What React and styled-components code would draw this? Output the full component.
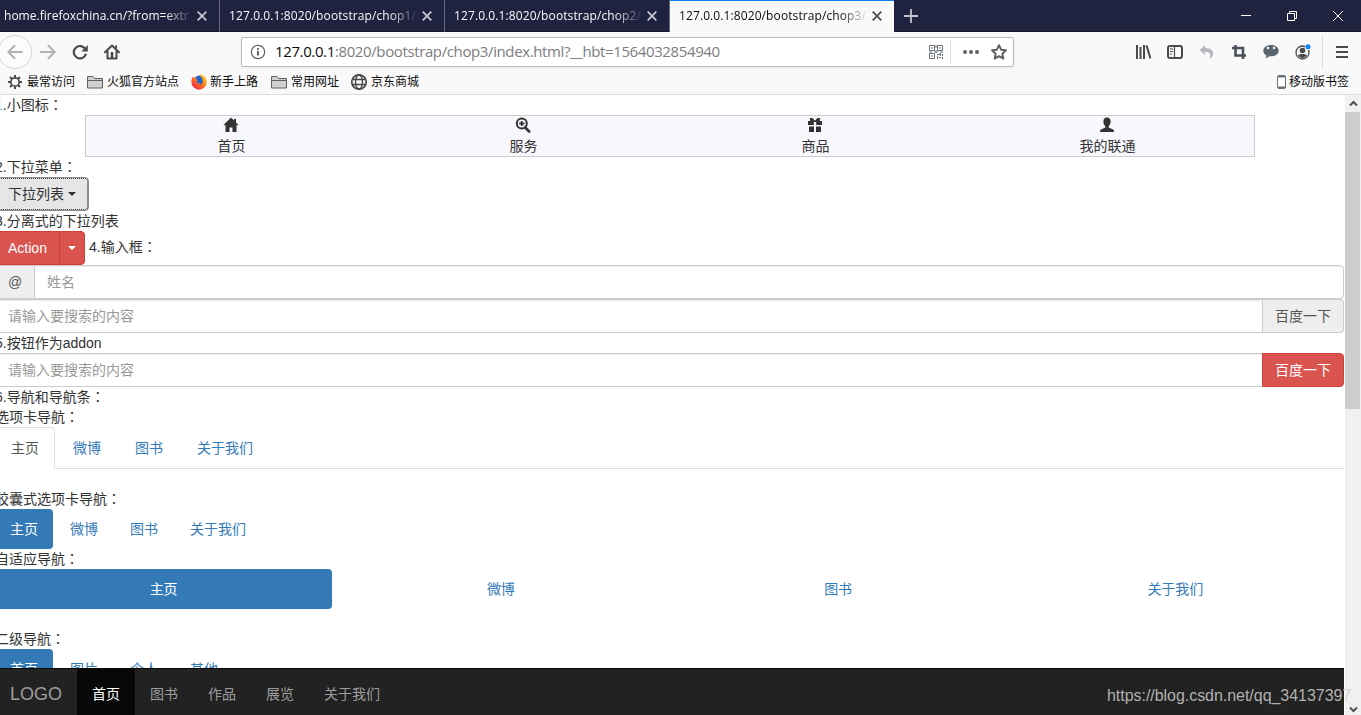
import React from "react";
import styled, { createGlobalStyle, css } from "styled-components";

const ui = `"Open Sans", "Noto Sans CJK SC", sans-serif`;
const body = `"Liberation Sans", "Noto Sans CJK SC", sans-serif`;

const Global = createGlobalStyle`
  *, *::before, *::after { box-sizing: border-box; }
  body { margin: 0; overflow: hidden; }
`;

const Window = styled.div`
  width: 1361px;
  height: 715px;
  display: flex;
  flex-direction: column;
  overflow: hidden;
  background: #fff;
  position: relative;
`;

/* ---------- browser chrome ---------- */
const TabStrip = styled.div`
  height: 32px;
  flex: none;
  display: flex;
  background: #202340;
  border-bottom: 1px solid #15172b;
`;
const Tab = styled.div`
  width: ${(p) => p.$w}px;
  height: 32px;
  display: flex;
  align-items: center;
  padding-left: ${(p) => p.$pad || 9}px;
  padding-right: 12px;
  font: 12px/32px ${ui};
  color: ${(p) => (p.$active ? "#0c0c0d" : "#f9f9fa")};
  border-right: 1px solid ${(p) => (p.$active ? "#f9f9fa" : "#62647a")};
  ${(p) =>
    p.$active &&
    css`
      background: linear-gradient(#0a84ff 1px, #f9f9fa 1px);
      border-right: 0;
    `}
`;
const TabTitle = styled.span`
  flex: 1;
  min-width: 0;
  white-space: nowrap;
  letter-spacing: ${(p) => p.$ls}px;
  mask-image: linear-gradient(to right, #000 calc(100% - 30px), transparent);
`;
const TabClose = styled.svg`
  flex: none;
  width: 10px;
  height: 10px;
  margin-left: 3px;
  stroke: ${(p) => (p.$active ? "#4a4a4f" : "#c9cad3")};
  stroke-width: 1.7;
`;
const NewTab = styled.div`
  display: flex;
  align-items: center;
  padding-left: 10px;
  height: 31px;
`;
const Spacer = styled.div`
  flex: 1;
`;
const WindowButtons = styled.div`
  display: flex;
  align-items: center;
  gap: 36px;
  padding-right: 18px;
  height: 31px;
`;
const ToolBar = styled.div`
  height: 40px;
  flex: none;
  display: flex;
  align-items: center;
  background: #f9f9fa;
`;
const NavButtons = styled.div`
  display: flex;
  align-items: center;
  width: 241px;
`;
const BackCircle = styled.div`
  width: 34px;
  height: 34px;
  margin-left: -2px;
  margin-right: 7px;
  border: 1px solid #d5d5d7;
  border-radius: 50%;
  background: #fcfcfc;
  display: flex;
  align-items: center;
  justify-content: center;
`;
const Icon = styled.svg`
  width: ${(p) => p.$w || p.$s || 16}px;
  height: ${(p) => p.$s || 16}px;
  flex: none;
  display: block;
  margin-left: ${(p) => p.$ml || 0}px;
  margin-right: ${(p) => p.$mr || 0}px;
`;
const UrlBar = styled.div`
  width: 773px;
  height: 30px;
  display: flex;
  align-items: center;
  padding: 0 6px 0 8px;
  background: #fff;
  border: 1px solid #b9b9bb;
  border-radius: 2px;
  box-shadow: 0 1px 3px rgba(0, 0, 0, 0.06);
`;
const Url = styled.span`
  flex: 1;
  margin-left: 9px;
  padding-bottom: 2px;
  font: 15px/26px ${ui};
  letter-spacing: -0.38px;
  color: #7d7d7f;
  white-space: nowrap;
`;
const Host = styled.span`
  color: #0c0c0d;
`;
const Divider = styled.div`
  width: 1px;
  height: ${(p) => p.$h}px;
  margin-left: ${(p) => p.$ml}px;
  background: #dcdcde;
`;
const Bookmarks = styled.div`
  height: 23px;
  flex: none;
  display: flex;
  align-items: center;
  padding: 0 12px 2px 7px;
  background: #f9f9fa;
  border-bottom: 1px solid #dedede;
  font: 12px/20px ${ui};
  color: #0c0c0d;
`;
const Bookmark = styled.span`
  display: flex;
  align-items: center;
  gap: ${(p) => p.$gap || 4}px;
  margin-right: ${(p) => (p.$mr === undefined ? 12 : p.$mr)}px;
  white-space: nowrap;
`;

/* ---------- page ---------- */
const Viewport = styled.div`
  flex: 1;
  min-height: 0;
  display: flex;
`;
const PageClip = styled.div`
  width: 1344px;
  height: 620px;
  overflow: hidden;
  display: flex;
  flex-direction: column;
`;
const Content = styled.div`
  height: 573px;
  flex: none;
  width: 1349px;
  margin-left: -5px;
  overflow: hidden;
  font: 14px/20px ${body};
  color: #333;
`;
const Line = styled.div`
  height: 20px;
  margin-top: ${(p) => p.$mt || 0}px;
  white-space: nowrap;
`;
const Selected = styled.span`
  color: #6cb5f7;
`;
const CenteredColon = styled.span`
  font-family: "Noto Sans CJK TC", sans-serif;
  line-height: 1;
`;
const IconNav = styled.div`
  width: 1170px;
  height: 42px;
  margin: 0 auto;
  display: flex;
  background: #f7f7fd;
  border: 1px solid #ccc;
`;
const IconNavItem = styled.div`
  flex: 1;
  display: flex;
  flex-direction: column;
  align-items: center;
`;
const GlyphBox = styled.div`
  height: 20px;
  padding: 1px 1px 0 0;
`;
const DropButton = styled.button`
  display: flex;
  align-items: center;
  gap: 4px;
  width: 94px;
  height: 34px;
  padding: 0 12px;
  font: 14px/20px ${body};
  color: #333;
  background: #e6e6e6;
  border: 1px solid #8c8c8c;
  border-radius: 4px;
  outline: 1px dotted #333;
  outline-offset: -2px;
  white-space: nowrap;
`;
const Caret = styled.span`
  border-top: 4px solid currentColor;
  border-left: 4px solid transparent;
  border-right: 4px solid transparent;
`;
const SplitRow = styled.div`
  height: 34px;
  display: flex;
`;
const DangerButton = styled.button`
  display: flex;
  align-items: center;
  justify-content: center;
  width: ${(p) => p.$w}px;
  height: 34px;
  padding: 0;
  margin-left: ${(p) => p.$ml || 0}px;
  font: 14px/20px ${body};
  color: #fff;
  background: #d9534f;
  border: 1px solid #d43f3a;
  border-radius: ${(p) => p.$r};
`;
const SplitLabel = styled.span`
  margin-left: 4px;
  padding-top: 6px;
`;
const InputGroup = styled.div`
  height: 34px;
  display: flex;
`;
const Field = styled.input`
  flex: 1;
  min-width: 0;
  height: 34px;
  padding: 6px 12px;
  font: 14px/20px ${body};
  border: 1px solid #ccc;
  border-radius: ${(p) => p.$r};
  box-shadow: inset 0 1px 1px rgba(0, 0, 0, 0.075);
  outline: 0;
  &::placeholder {
    color: #999;
    opacity: 1;
  }
`;
const Addon = styled.span`
  width: ${(p) => p.$w}px;
  height: 34px;
  line-height: 32px;
  text-align: center;
  color: #555;
  background: #eee;
  border: 1px solid #ccc;
  border-radius: ${(p) => p.$r};
  ${(p) => (p.$side === "left" ? "border-right: 0;" : "border-left: 0;")}
`;
const Tabs = styled.div`
  height: 42px;
  display: flex;
  gap: 2px;
  border-bottom: 1px solid #ddd;
`;
const TabLink = styled.a`
  height: 42px;
  padding: 10px 15px;
  border: 1px solid transparent;
  border-radius: 4px 4px 0 0;
  color: #337ab7;
  ${(p) =>
    p.$active &&
    css`
      color: #555;
      background: #fff;
      border-color: #ddd #ddd #fff;
    `}
`;
const Pills = styled.div`
  height: 40px;
  display: flex;
  gap: ${(p) => (p.$justified ? 0 : 2)}px;
`;
const Pill = styled.a`
  flex: ${(p) => (p.$justified ? "1" : "none")};
  height: 40px;
  padding: 10px 15px;
  text-align: center;
  border-radius: 4px;
  color: ${(p) => (p.$active ? "#fff" : "#337ab7")};
  background: ${(p) => (p.$active ? "#337ab7" : "transparent")};
`;
const NavBar = styled.div`
  height: 47px;
  flex: none;
  display: flex;
  width: 1349px;
  margin-left: -5px;
  background: #222;
  border-top: 1px solid #080808;
  font: 14px/20px ${body};
`;
const Brand = styled.span`
  width: 82px;
  padding: 15px;
  font-size: 18px;
  color: #9d9d9d;
`;
const NavLink = styled.a`
  padding: 15px;
  color: ${(p) => (p.$active ? "#fff" : "#9d9d9d")};
  background: ${(p) => (p.$active ? "#080808" : "transparent")};
`;
const ScrollBar = styled.div`
  width: 17px;
  height: 620px;
  display: flex;
  flex-direction: column;
  align-items: center;
  background: #f0f0f0;
  border-left: 1px solid #fff;
`;
const ScrollArrow = styled.div`
  height: ${(p) => p.$h || 17}px;
  width: 100%;
  display: flex;
  align-items: center;
  justify-content: center;
`;
const Thumb = styled.div`
  width: 15px;
  height: 297px;
  margin-right: 1px;
  background: #cdcdcd;
`;
const Watermark = styled.div`
  position: absolute;
  left: 1107px;
  top: 686px;
  font: 16px/20px ${body};
  letter-spacing: -0.04px;
  color: rgba(205, 205, 205, 0.85);
  white-space: nowrap;
`;

const Colon = () => <CenteredColon>：</CenteredColon>;
const CloseX = ({ active }) => (
  <TabClose $active={active} viewBox="0 0 10 10"><path d="M.7.7l8.6 8.6M9.3.7L.7 9.3" /></TabClose>
);
const Folder = () => (
  <Icon viewBox="0 0 16 16">
    <path d="M.5 14V2.500h5.500l1.500 2h8V14z" fill="#d0d0d2" stroke="#5f5f61" />
    <path d="M1 6.500h14.500" stroke="#5f5f61" />
  </Icon>
);
const Gear = () => (
  <Icon viewBox="0 0 16 16" stroke="#4a4a4c" fill="none">
    <circle cx="8" cy="8" r="4.200" strokeWidth="1.700" />
    <path strokeWidth="2" d="M8 1v2.500M8 12.500V15M1 8h2.500M12.500 8H15M3.050 3.050l1.700 1.700M11.250 11.250l1.700 1.700M3.050 12.950l1.700-1.700M11.250 4.750l1.700-1.700" />
  </Icon>
);
const Firefox = () => (
  <Icon viewBox="0 0 16 16">
    <defs>
      <linearGradient id="fox" x1="1" y1="0" x2="0.200" y2="1">
        <stop offset="0" stopColor="#ffe226" />
        <stop offset=".45" stopColor="#ff8a16" />
        <stop offset="1" stopColor="#f0204d" />
      </linearGradient>
    </defs>
    <circle cx="8.300" cy="7" r="5.600" fill="#1c5fd0" />
    <path fill="url(#fox)" d="M2 2.300c.4.900.8 1.300 1.500 1.600 1-.4 2-.3 2.800.2-1 .3-1.300 1-1.200 1.500.5.300 1.500.1 1.700.6 0 .7-1 .9-1.300 1.500.2 1.300 1.500 1.700 2.500 1.300.7-.3 1.400-.2 1.700.2-.6 1-2 1.500-3.300 1.200 2.300 1.300 5.300-.2 5.300-3.200 0-2.300-1.200-3.800-2.700-5.200 0-.6-.2-1.200 0-1.800 3.800 1 6.700 3.800 6.700 7.700a7.600 7.600 0 0 1-15.300.3C.300 6 .900 3.800 2 2.300z" />
  </Icon>
);
const Globe = () => (
  <Icon viewBox="0 0 16 16" fill="none" stroke="#4a4a4c" strokeWidth="1.400">
    <circle cx="8" cy="8" r="7.200" strokeWidth="1.700" />
    <ellipse cx="8" cy="8" rx="3.500" ry="7" />
    <path d="M1.500 5.500h13M1.500 10.500h13" />
  </Icon>
);

const glyphs = {
  home: <path d="M8 .5L.3 8.300h2.200V15h4v-4.500h3V15h4V8.300h2.200L13 5.500V2h-2v1.500z" />,
  zoom: (
    <>
      <circle cx="6.800" cy="6.500" r="5" fill="none" stroke="#333" strokeWidth="2" />
      <path d="M10.200 10.500l4 4" stroke="#333" strokeWidth="2.600" strokeLinecap="round" />
      <path d="M5.900 3.900h1.800v1.700h1.700v1.800H7.700v1.700H5.900V7.400H4.200V5.600h1.700z" />
    </>
  ),
  gift: (
    <>
      <path d="M1 4h5.800v4H1zM9.200 4H15v4H9.200zM2 9.500h5V15H2zM9 9.500h5V15H9z" />
      <path d="M8 4.500L5.800 1.700 3.200 1.500 3.800 4zM8 4.500l2.200-2.800 2.600-.2L12.200 4z" stroke="#333" strokeWidth="1" />
    </>
  ),
  user: <path d="M8 .5c-2.400 0-3.600 1.500-3.600 4 0 2 .8 3.700 1.900 4.800v1.200L2 12.600c-.8.400-1 .9-1 2.400h14c0-1.500-.2-2-1-2.400l-4.300-2.100V9.300c1.100-1.100 1.900-2.800 1.900-4.800 0-2.500-1.200-4-3.600-4z" />,
};

export default function App() {
  return (
    <>
      <Global />
      <Window>
        <TabStrip>
          <Tab $w={220} $pad={4}><TabTitle $ls={0.02}>home.firefoxchina.cn/?from=extr</TabTitle><CloseX /></Tab>
          <Tab $w={225}><TabTitle $ls={0.1}>127.0.0.1:8020/bootstrap/chop1/</TabTitle><CloseX /></Tab>
          <Tab $w={225}><TabTitle $ls={0.1}>127.0.0.1:8020/bootstrap/chop2/</TabTitle><CloseX /></Tab>
          <Tab $w={224} $active><TabTitle $ls={0.1}>127.0.0.1:8020/bootstrap/chop3/</TabTitle><CloseX active /></Tab>
          <NewTab>
            <Icon $s={14} viewBox="0 0 14 14"><path d="M7 0v14M0 7h14" stroke="#c3c4ce" strokeWidth="1.800" /></Icon>
          </NewTab>
          <Spacer />
          <WindowButtons>
            <Icon $s={10} viewBox="0 0 10 10"><path d="M0 4.500h10" stroke="#fff" /></Icon>
            <Icon $s={10} viewBox="0 0 10 10" fill="none" stroke="#fff"><path d="M.5 2.500h7v7h-7zM2.500 2.500v-2h7v7h-2" /></Icon>
            <Icon $s={10} viewBox="0 0 10 10"><path d="M0 0l10 10M10 0L0 10" stroke="#fff" /></Icon>
          </WindowButtons>
        </TabStrip>

        <ToolBar>
          <NavButtons>
            <BackCircle>
              <Icon viewBox="0 0 16 16" fill="none" stroke="#b1b1b3" strokeWidth="2" strokeLinecap="round"><path d="M15 8H1.500M7.500 1.800L1.300 8l6.200 6.200" /></Icon>
            </BackCircle>
            <Icon $ml={1} viewBox="0 0 16 16" fill="none" stroke="#b1b1b3" strokeWidth="2" strokeLinecap="round"><path d="M1 8h13.500M8.500 1.800L14.700 8l-6.200 6.200" /></Icon>
            <Icon $ml={16} viewBox="0 0 16 16"><path d="M13.300 5A6.200 6.200 0 1 0 14 9.800" fill="none" stroke="#4a4a4c" strokeWidth="2.200" /><path d="M15.800 1v6.500H9.300z" fill="#4a4a4c" /></Icon>
            <Icon $ml={16} viewBox="0 0 16 16"><path d="M1 8.300l7-6.800 7 6.800M3.500 7v7.500h9V7" fill="none" stroke="#4a4a4c" strokeWidth="2" strokeLinejoin="round" strokeLinecap="round" /><path d="M6.700 8h2.600v6H6.700zM11 1.500h2V5l-2-2z" fill="#4a4a4c" /></Icon>
          </NavButtons>
          <UrlBar>
            <Icon viewBox="0 0 16 16"><circle cx="8" cy="8" r="6.700" fill="none" stroke="#666" strokeWidth="1.200" /><path d="M8 7v4.500M8 4v1.800" stroke="#555" strokeWidth="1.800" /></Icon>
            <Url><Host>127.0.0.1</Host>:8020/bootstrap/chop3/index.html?__hbt=1564032854940</Url>
            <Icon $s={14} viewBox="0 0 14 14" fill="none" stroke="#6b7480">
              <path d="M.5.5h5v5h-5zM8.500.5h5v5h-5zM.5 8.500h5v5h-5z" />
              <path d="M2 3h2M10 3h2M2 11h2M7 0v3M7 5v3M0 7h3M5 7h4M11 7h3M8 9.500h3M11.500 8v3M8.500 11v3M10 12.500h2M13.500 9v2M13.500 12v2" />
            </Icon>
            <Divider $h={22} $ml={7} />
            <Icon $ml={12} viewBox="0 0 16 16" fill="#616163"><circle cx="2" cy="8" r="2" /><circle cx="8" cy="8" r="2" /><circle cx="14" cy="8" r="2" /></Icon>
            <Icon $ml={12} viewBox="0 0 16 16"><path d="M8 1.200l2.100 4.500 4.800.6-3.500 3.400.9 4.900L8 12.200l-4.300 2.400.9-4.900L1.100 6.300l4.800-.6z" fill="none" stroke="#616163" strokeWidth="2" strokeLinejoin="round" /></Icon>
          </UrlBar>
          <Spacer />
          <Icon viewBox="0 0 16 16" stroke="#4a4a4c" strokeWidth="2"><path d="M2 1v14M5.500 3v12M9 1v14" /><path d="M11.500 1.500L15.500 14.500" /></Icon>
          <Icon $ml={16} viewBox="0 0 16 16" fill="none" stroke="#4a4a4c"><rect x="1" y="2" width="14" height="12" rx="2" strokeWidth="2" /><path d="M7.500 2v12M3 5h3M3 7.500h3M3 10h2" strokeWidth="1.200" /></Icon>
          <Icon $ml={16} viewBox="0 0 16 16" fill="#b5b8bd"><path d="M6 1L.5 6 6 11V8c4.200-.4 6.300 1.500 4.500 6.800C15.500 12 17 4.500 6 4z" /></Icon>
          <Icon $ml={16} viewBox="0 0 16 16" fill="none" stroke="#47505b" strokeWidth="2.600"><path d="M4.500 1v10.500H15M1 4h11v11" /></Icon>
          <Icon $ml={16} viewBox="0 0 16 16"><path d="M8 1C3.500 1 .3 3.500.3 6.700c0 2 1.200 3.800 3.300 4.800L2.500 14.500l4-2.200c5 .5 9.200-2 9.200-5.600C15.700 3.500 12.500 1 8 1z" fill="#59646f" /><circle cx="5" cy="4" r="1.200" fill="#fff" /><circle cx="11" cy="4" r="1.200" fill="#fff" /></Icon>
          <Icon $ml={16} viewBox="0 0 16 16"><circle cx="7.500" cy="8.500" r="6.500" fill="none" stroke="#4a4a4c" strokeWidth="1.300" /><circle cx="7.500" cy="6.500" r="2.800" fill="#4a4a4c" /><path d="M3 11.500c1-2 8-2 9 0-2 3.200-7 3.200-9 0z" fill="#4a4a4c" /><circle cx="13" cy="3" r="3" fill="#f9f9fa" /><circle cx="13" cy="2.800" r="2.500" fill="#0a84ff" /></Icon>
          <Divider $h={34} $ml={11} />
          <Icon $ml={11} $mr={11} viewBox="0 0 16 16" stroke="#4a4a4c" strokeWidth="2"><path d="M2 3h12M2 8h12M2 13h12" /></Icon>
        </ToolBar>

        <Bookmarks>
          <Bookmark><Gear />最常访问</Bookmark>
          <Bookmark>
            <Folder />火狐官方站点
          </Bookmark>
          <Bookmark $gap={3} $mr={13}><Firefox />新手上路</Bookmark>
          <Bookmark><Folder />常用网址</Bookmark>
          <Bookmark><Globe />京东商城</Bookmark>
          <Spacer />
          <Bookmark $gap={3} $mr={0}>
            <Icon $w={9} viewBox="0 0 9 16"><rect x=".5" y="1.500" width="8" height="13" rx="1.500" fill="#fff" stroke="#68727c" /><path d="M1 2.500h7M1 13.500h7" stroke="#68727c" strokeWidth="2" /></Icon>
            移动版书签
          </Bookmark>
        </Bookmarks>

        <Viewport>
          <PageClip>
            <Content>
              <Line><Selected>1</Selected>.小图标<Colon /></Line>
              <IconNav>
                {[["home", "首页"], ["zoom", "服务"], ["gift", "商品"], ["user", "我的联通"]].map(([g, t]) => (
                  <IconNavItem key={g}>
                    <GlyphBox><Icon viewBox="0 0 16 16" fill="#333">{glyphs[g]}</Icon></GlyphBox>
                    {t}
                  </IconNavItem>
                ))}
              </IconNav>
              <Line>2.下拉菜单<Colon /></Line>
              <DropButton>下拉列表<Caret /></DropButton>
              <Line>3.分离式的下拉列表</Line>
              <SplitRow>
                <DangerButton $w={65} $r="4px 0 0 4px">Action</DangerButton>
                <DangerButton $w={26} $ml={-1} $r="0 4px 4px 0"><Caret /></DangerButton>
                <SplitLabel>4.输入框<Colon /></SplitLabel>
              </SplitRow>
              <InputGroup>
                <Addon $w={39} $side="left" $r="4px 0 0 4px">@</Addon>
                <Field $r="0 4px 4px 0" placeholder="姓名" />
              </InputGroup>
              <InputGroup>
                <Field $r="4px 0 0 4px" placeholder="请输入要搜索的内容" />
                <Addon $w={81} $side="right" $r="0 4px 4px 0">百度一下</Addon>
              </InputGroup>
              <Line>5.按钮作为addon</Line>
              <InputGroup>
                <Field $r="4px 0 0 4px" placeholder="请输入要搜索的内容" />
                <DangerButton $w={82} $ml={-1} $r="0 4px 4px 0">百度一下</DangerButton>
              </InputGroup>
              <Line>6.导航和导航条<Colon /></Line>
              <Line>选项卡导航<Colon /></Line>
              <Tabs>
                <TabLink $active>主页</TabLink><TabLink>微博</TabLink><TabLink>图书</TabLink><TabLink>关于我们</TabLink>
              </Tabs>
              <Line $mt={20}>胶囊式选项卡导航<Colon /></Line>
              <Pills>
                <Pill $active>主页</Pill><Pill>微博</Pill><Pill>图书</Pill><Pill>关于我们</Pill>
              </Pills>
              <Line>自适应导航<Colon /></Line>
              <Pills $justified>
                <Pill $justified $active>主页</Pill><Pill $justified>微博</Pill><Pill $justified>图书</Pill><Pill $justified>关于我们</Pill>
              </Pills>
              <Line $mt={20}>二级导航<Colon /></Line>
              <Pills>
                <Pill $active>首页</Pill><Pill>图片</Pill><Pill>个人</Pill><Pill>其他</Pill>
              </Pills>
            </Content>
            <NavBar>
              <Brand>LOGO</Brand>
              <NavLink $active>首页</NavLink><NavLink>图书</NavLink><NavLink>作品</NavLink><NavLink>展览</NavLink><NavLink>关于我们</NavLink>
            </NavBar>
          </PageClip>
          <ScrollBar>
            <ScrollArrow><Icon $s={9} viewBox="0 0 9 9"><path d="M1 6.500L4.500 3 8 6.500" fill="none" stroke="#505050" strokeWidth="2" /></Icon></ScrollArrow>
            <Thumb />
            <Spacer />
            <ScrollArrow $h={13}><Icon $s={9} viewBox="0 0 9 9"><path d="M1 3.500L4.500 7 8 3.500" fill="none" stroke="#505050" strokeWidth="2" /></Icon></ScrollArrow>
          </ScrollBar>
        </Viewport>
        <Watermark>https://blog.csdn.net/qq_34137397</Watermark>
      </Window>
    </>
  );
}
